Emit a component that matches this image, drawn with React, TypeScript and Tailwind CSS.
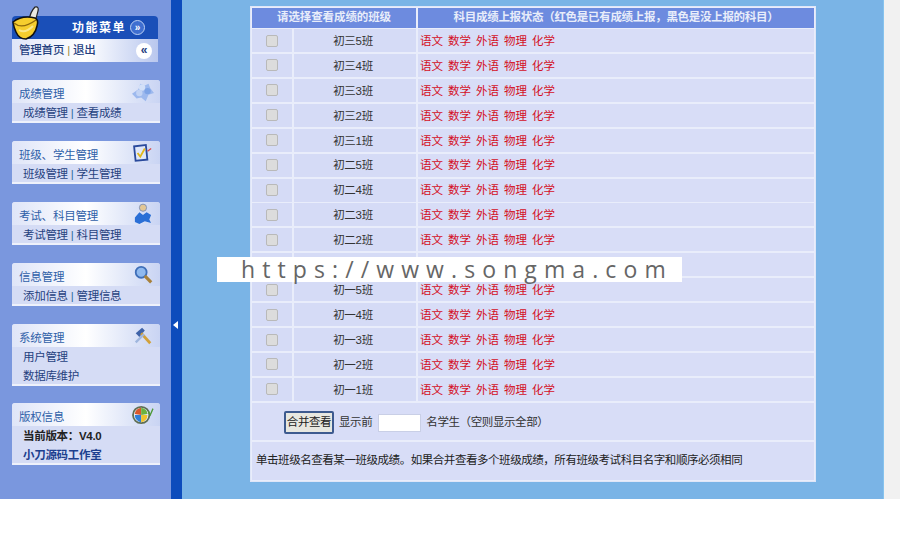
import React from "react";

const classes = ["初三5班","初三4班","初三3班","初三2班","初三1班","初二5班","初二4班","初二3班","初二2班","","初一5班","初一4班","初一3班","初一2班","初一1班"];
const subjects = ["语文","数学","外语","物理","化学"];

function Cloud() {
  return (
    <svg width="24" height="22" viewBox="0 0 26 24">
      <path d="M1 14 L8 9 L10 3 L15 5 L19 3 L21 8 L25 13 L19 15 L16 22 L11 18 L6 19 Z" fill="#9db9ee" />
      <circle cx="12" cy="7" r="3.5" fill="#d3e0f8" />
      <circle cx="18" cy="11" r="3.5" fill="#7ea4e6" />
      <circle cx="9" cy="13" r="3.5" fill="#c2d3f4" />
    </svg>
  );
}
function Check() {
  return (
    <svg width="20" height="20" viewBox="0 0 22 22">
      <rect x="2" y="3" width="13" height="16" fill="#dfe7fa" stroke="#2a4a9c" strokeWidth="2" transform="rotate(-6 8 11)" />
      <path d="M5 11 L8 15 L13 6" fill="none" stroke="#e2b81c" strokeWidth="2" />
      <path d="M16 9 L20 6" stroke="#d84b4b" strokeWidth="1.5" />
    </svg>
  );
}
function Person() {
  return (
    <svg width="18" height="24" viewBox="0 0 20 24">
      <circle cx="10" cy="5" r="4" fill="#e3c795" stroke="#7d8fb5" />
      <path d="M1 16 L6 10 L10 13 L14 10 L19 13 L17 18 L19 22 L12 20 L6 23 L1 21 Z" fill="#2a6fd6" />
    </svg>
  );
}
function Magnifier() {
  return (
    <svg width="20" height="20" viewBox="0 0 22 22">
      <circle cx="9" cy="8" r="6" fill="#8fb9ee" stroke="#3f6fb8" strokeWidth="2" />
      <path d="M13 12 L20 19" stroke="#a8813a" strokeWidth="3.5" />
    </svg>
  );
}
function Tools() {
  return (
    <svg width="20" height="20" viewBox="0 0 22 22">
      <path d="M3 8 L10 2 L13 5 L7 12 Z" fill="#3f63a8" />
      <path d="M9 8 L19 19" stroke="#d2a13a" strokeWidth="3" />
      <path d="M3 18 L12 9" stroke="#9fb6dd" strokeWidth="2.5" />
    </svg>
  );
}
function Globe() {
  return (
    <svg width="22" height="20" viewBox="0 0 24 22">
      <circle cx="10" cy="11" r="9" fill="#e8eefb" stroke="#5f6f55" strokeWidth="2" />
      <path d="M10 3 A8 8 0 0 0 3 10 L10 11 Z" fill="#d9572b" />
      <path d="M10 3 A8 8 0 0 1 17 10 L10 11 Z" fill="#6cb33f" />
      <path d="M3 11 A8 8 0 0 0 10 19 L10 11 Z" fill="#2f7fd8" />
      <path d="M17 11 A8 8 0 0 1 10 19 L10 11 Z" fill="#f0c22c" />
      <path d="M18 7 L20 11 L23 4" fill="none" stroke="#4f9a3a" strokeWidth="1.5" />
    </svg>
  );
}
function Logo() {
  return (
    <svg width="28" height="34" viewBox="0 0 28 34">
      <path d="M17 15 Q18 6 23 1 Q27 0 26 5 Q25 11 22 16 Z" fill="#e9e9e2" stroke="#222" strokeWidth="1.2" />
      <path d="M1 16 Q10 9 23 12 Q27 14 25 20 Q23 30 14 33 Q7 33 4 26 Q2 22 1 16 Z" fill="#f6ce2e" stroke="#111" strokeWidth="1.5" />
      <path d="M2 17 Q10 24 24 14" fill="none" stroke="#8f6a0c" strokeWidth="1.3" />
      <path d="M7 24 Q13 28 21 20" fill="none" stroke="#fbe88a" strokeWidth="2" />
    </svg>
  );
}

function Card({ title, icon, children, bodyClass }: { title: string; icon: React.ReactNode; children: React.ReactNode; bodyClass: string }) {
  return (
    <div className="w-[148px] rounded-t-[3px] overflow-hidden bg-[#d5dcf5] border-b-2 border-[#eef1fb]">
      <div className="h-[23px] flex items-center justify-between pl-[7px] pr-[4px] bg-gradient-to-r from-[#dfe5f8] via-white to-[#c9d4f3]">
        <span className="text-[11.5px] tracking-[-0.2px] text-[#2f5fa8] leading-none pt-[7px]">{title}</span>
        <span className="flex items-center justify-center w-[26px] h-[22px]">{icon}</span>
      </div>
      <div className={"pl-[11px] text-[11.5px] tracking-[-0.3px] text-[#26417e] " + bodyClass}>{children}</div>
    </div>
  );
}

function Sep() {
  return <span className="mx-[3px] text-[#2d6f9c]">|</span>;
}

function Row({ name }: { name: string }) {
  return (
    <div className="flex h-[23px] mb-[1.93px] gap-[2px]">
      <div className="w-[40px] bg-[#d5dbf6] flex items-center justify-center">
        {name && <span className="block w-[12px] h-[12px] rounded-[2px] bg-[#dcdcdc] border border-[#b9b9b9]" />}
      </div>
      <div className="w-[122px] bg-[#d5dbf6] flex items-center justify-center text-[#333333] pr-[4px] pt-[2px] tracking-[-0.3px]">{name}</div>
      <div className="flex-1 bg-[#d8ddf7] flex items-center pl-[2px] gap-[4px] pt-[2px] text-[#d4101f]">
        {name && subjects.map((s) => (
          <span key={s} className="w-[24px]">{s}</span>
        ))}
      </div>
    </div>
  );
}

export default function App() {
  return (
    <div className="relative w-[900px] h-[537px] overflow-hidden bg-white text-[11.5px]" style={{ fontFamily: '"Liberation Sans", "Noto Sans CJK SC", sans-serif' }}>
      <div className="flex h-[499px]">
        <aside className="w-[171px] bg-[#7a97de] pl-[12px] pt-[16px] flex flex-col">
          <div className="relative w-[146px]">
            <div className="absolute -top-[10px] left-[0px]"><Logo /></div>
            <div className="h-[23px] rounded-t-[4px] bg-[#1a4fb8] flex items-center justify-end pr-[13px] gap-[4px] text-white font-bold text-[12px]">
              <span className="tracking-[1.5px]">功能菜单</span>
              <span className="w-[15px] h-[15px] rounded-full border border-[#bcd0f3] bg-[#3f6fd0] flex items-center justify-center text-[10px] leading-none">»</span>
            </div>
            <div className="h-[23px] flex items-center justify-between pl-[7px] pr-[6px] bg-gradient-to-r from-[#dfe5f8] via-white to-[#b9c7ee] text-[#24407e] font-medium tracking-[-0.2px]">
              <span>管理首页<span className="mx-[3px] text-[#9a8a3a]">|</span>退出</span>
              <span className="w-[16px] h-[16px] rounded-full bg-white flex items-center justify-center text-[#24407e] font-bold text-[12px] leading-none pb-[2px]">«</span>
            </div>
          </div>

          <div className="mt-[18px]">
            <Card title="成绩管理" icon={<Cloud />} bodyClass="h-[18px] flex items-center pt-[4px]">
              <span>成绩管理<Sep />查看成绩</span>
            </Card>
          </div>
          <div className="mt-[18px]">
            <Card title="班级、学生管理" icon={<Check />} bodyClass="h-[18px] flex items-center pt-[4px]">
              <span>班级管理<Sep />学生管理</span>
            </Card>
          </div>
          <div className="mt-[18px]">
            <Card title="考试、科目管理" icon={<Person />} bodyClass="h-[18px] flex items-center pt-[4px]">
              <span>考试管理<Sep />科目管理</span>
            </Card>
          </div>
          <div className="mt-[18px]">
            <Card title="信息管理" icon={<Magnifier />} bodyClass="h-[18px] flex items-center pt-[4px]">
              <span>添加信息<Sep />管理信息</span>
            </Card>
          </div>
          <div className="mt-[18px]">
            <Card title="系统管理" icon={<Tools />} bodyClass="h-[37px] flex flex-col justify-center gap-[5px] leading-[14px] pt-[2px]">
              <span>用户管理</span>
              <span>数据库维护</span>
            </Card>
          </div>
          <div className="mt-[17px]">
            <Card title="版权信息" icon={<Globe />} bodyClass="h-[37px] flex flex-col justify-center gap-[5px] leading-[14px] font-bold pt-[2px]">
              <span className="text-[#222222]">当前版本：V4.0</span>
              <span className="text-[#1c3f8f]">小刀源码工作室</span>
            </Card>
          </div>
        </aside>

        <div className="w-[11px] bg-[#0d4cbc] relative">
          <span className="absolute top-[321px] left-[2px] w-0 h-0 border-y-[4px] border-y-transparent border-r-[5px] border-r-white" />
        </div>

        <main className="w-[702px] bg-[#7ab4e6] border-r border-[#86c3ee] pl-[68px] pt-[6px]">
          <div className="w-[566px] bg-[#e9edfb] border border-[#dfe6f8] p-[1px]">
            <div className="flex h-[20px] gap-[2px] mb-[1px] font-bold text-[#e8edfa]">
              <div className="w-[164px] bg-[#6d8bdf] flex items-center justify-center tracking-[-0.1px]">请选择查看成绩的班级</div>
              <div className="flex-1 bg-[#6d8bdf] flex items-center justify-center tracking-[-0.3px]">科目成绩上报状态（红色是已有成绩上报，黑色是没上报的科目）</div>
            </div>
            {classes.map((c, i) => (
              <Row key={i} name={c} />
            ))}
            <div className="h-[37px] bg-[#d8ddf7] flex items-center pl-[32px] pt-[3px] text-[#333333] mb-[2px] tracking-[-0.4px]">
              <button className="h-[23px] w-[50px] bg-[#e7e7e0] border-2 border-[#3d5a8f] rounded-[2px] text-[11.5px] text-[#222222] flex items-center justify-center whitespace-nowrap px-0">合并查看</button>
              <span className="ml-[5px]">显示前</span>
              <span className="ml-[6px] w-[43px] h-[18px] bg-white border border-[#c9cfe6]" />
              <span className="ml-[5px]">名学生（空则显示全部）</span>
            </div>
            <div className="h-[38px] bg-[#d8ddf7] flex items-center pl-[4px] text-[#222222] tracking-[-0.45px]">
              单击班级名查看某一班级成绩。如果合并查看多个班级成绩，所有班级考试科目名字和顺序必须相同
            </div>
          </div>
        </main>

        <div className="flex-1 bg-[#f1f1f1]" />
      </div>

      <div className="absolute left-[217px] top-[257px] w-[465px] h-[25px] bg-white flex items-center pl-[24px] text-[23px] leading-none tracking-[7.1px] text-[#666666] whitespace-nowrap" style={{ fontFamily: '"Open Sans", sans-serif' }}>
        https://www.songma.com
      </div>
    </div>
  );
}
